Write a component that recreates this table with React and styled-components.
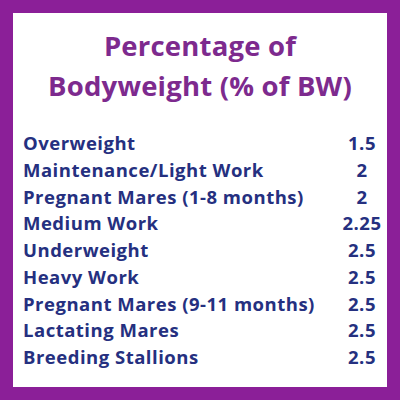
import React from 'react';
import styled, { createGlobalStyle } from 'styled-components';

const GlobalStyle = createGlobalStyle`
    body {
        margin: 0;
        font-family: "Open Sans", "Liberation Sans", sans-serif;
    }
`;

const Frame = styled.div`
    width: 400px;
    height: 400px;
    box-sizing: border-box;
    border: 13px solid #8b1f98;
    background: #fff;
    padding: 13px 0 0 10px;
`;

const Title = styled.h1`
    margin: 0;
    padding-right: 10px;
    font-size: 27.5px;
    line-height: 40px;
    letter-spacing: 0.2px;
    font-weight: 700;
    color: #7d2a8e;
    text-align: center;
`;

const Table = styled.ul`
    list-style: none;
    margin: 24px 0 0;
    padding: 0;
`;

const Row = styled.li`
    display: grid;
    grid-template-columns: 1fr 50px;
    font-size: 18.5px;
    line-height: 26.75px;
    letter-spacing: 0.5px;
    font-weight: 700;
    color: #253080;
    .value {
        text-align: center;
    }
`;

const rows = [
    { id: 1, label: 'Overweight', value: '1.5' },
    { id: 2, label: 'Maintenance/Light Work', value: '2' },
    { id: 3, label: 'Pregnant Mares (1-8 months)', value: '2' },
    { id: 4, label: 'Medium Work', value: '2.25' },
    { id: 5, label: 'Underweight', value: '2.5' },
    { id: 6, label: 'Heavy Work', value: '2.5' },
    { id: 7, label: 'Pregnant Mares (9-11 months)', value: '2.5' },
    { id: 8, label: 'Lactating Mares', value: '2.5' },
    { id: 9, label: 'Breeding Stallions', value: '2.5' },
];

const App = () => {
    return (
        <>
            <GlobalStyle />
            <Frame>
                <Title>Percentage of<br />Bodyweight (% of BW)</Title>
                <Table>
                    {rows.map(item => (
                        <Row key={item.id}>
                            <span>{item.label}</span>
                            <span className='value'>{item.value}</span>
                        </Row>
                    ))}
                </Table>
            </Frame>
        </>
    );
};

export default App;
